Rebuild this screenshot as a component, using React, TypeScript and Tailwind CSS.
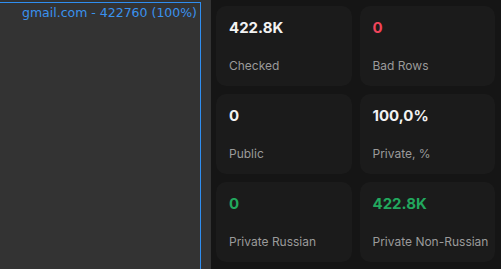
const stats = [
  { value: '422.8K', label: 'Checked', color: 'text-[#f2f2f2]' },
  { value: '0', label: 'Bad Rows', color: 'text-[#f0445a]' },
  { value: '0', label: 'Public', color: 'text-[#f2f2f2]' },
  { value: '100,0%', label: 'Private, %', color: 'text-[#f2f2f2]' },
  { value: '0', label: 'Private Russian', color: 'text-[#22a85e]' },
  { value: '422.8K', label: 'Private Non-Russian', color: 'text-[#22a85e]' },
];

export default function App() {
  return (
    <div className="flex h-[269px] w-[501px] overflow-hidden font-['Inter',sans-serif]">
      <div className="w-[211px] shrink-0 bg-[#333333] pt-[2px] pr-[10px]">
        <div className="h-full border-t border-r border-[#2f8ef0] pr-[3px] text-right font-['DejaVu_Sans',sans-serif] text-[12.5px] leading-[20px] text-[#3a92ee]">
          gmail.com - 422760 (100%)
        </div>
      </div>
      <div className="flex-1 bg-[#151515] pt-[6px] pl-[5px] pr-[6px]">
        <div className="grid grid-cols-2 gap-2">
          {stats.map((s, i) => (
            <div key={i} className="flex h-20 flex-col justify-between rounded-[10px] bg-[#1b1b1b] px-[13px] pt-[11px] pb-[11px]">
              <div className={`text-[15px] leading-[22px] font-bold ${s.color}`}>{s.value}</div>
              <div className="whitespace-nowrap text-[12px] leading-[18px] text-[#9a9a9a]">{s.label}</div>
            </div>
          ))}
        </div>
      </div>
    </div>
  );
}
